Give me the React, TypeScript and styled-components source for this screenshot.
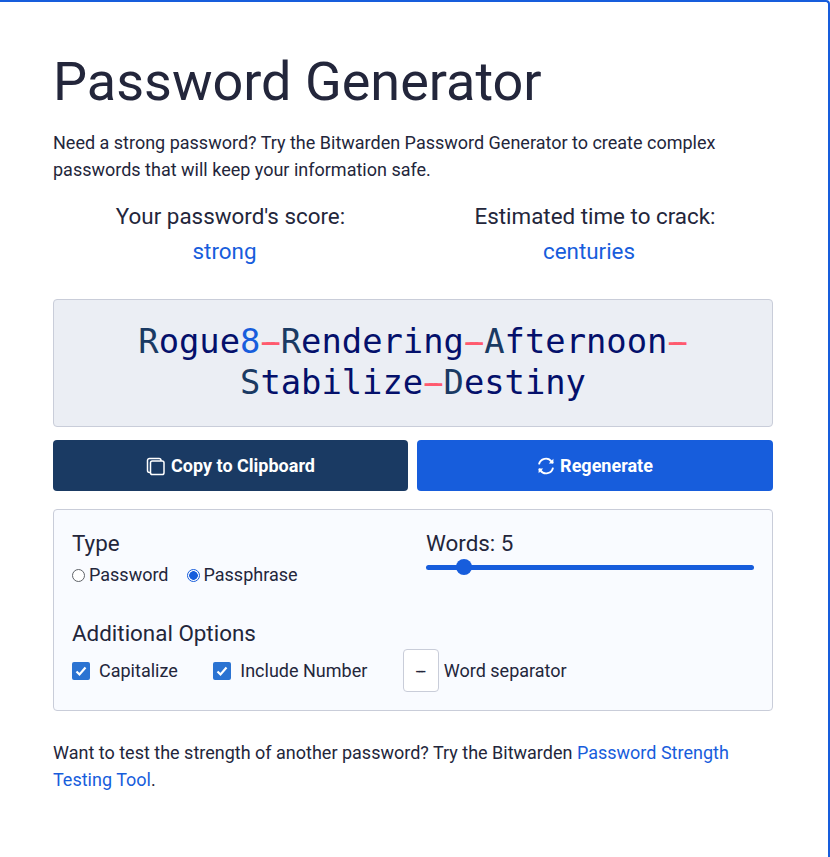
import React from 'react';
import styled, { createGlobalStyle } from 'styled-components';

const GlobalStyle = createGlobalStyle`
  html, body {
    margin: 0;
    padding: 0;
    background: #ffffff;
  }

  body {
    font-family: 'Roboto', 'Liberation Sans', sans-serif;
    color: #23263b;
  }
`;

const Card = styled.main`
  width: 830px;
  height: 857px;
  box-sizing: border-box;
  border-top: 2px solid #175ddc;
  border-right: 2px solid #175ddc;
  border-top-right-radius: 4px;
  padding: 47px 55px 0 53px;
  overflow: hidden;
`;

const Title = styled.h1`
  margin: 0;
  font-size: 54px;
  line-height: 66px;
  font-weight: 400;
  color: #23263b;
`;

const Intro = styled.p`
  margin: 14px 0 0;
  font-size: 18px;
  line-height: 27px;
`;

const ScoreRow = styled.div`
  display: grid;
  grid-template-columns: 355px 356px;
  gap: 9px;
  margin-top: 15px;
`;

const Score = styled.div`
  text-align: center;
`;

const ScoreLabel = styled.div`
  font-size: 22.4px;
  line-height: 36px;
`;

const ScoreValue = styled.div`
  font-size: 22.4px;
  line-height: 35px;
  padding-right: 12px;
  color: #175ddc;
`;

const PasswordBox = styled.div`
  box-sizing: border-box;
  height: 128px;
  margin-top: 30px;
  padding: 21px 60px 0;
  background: #ebeef4;
  border: 1px solid #c9cdd9;
  border-radius: 4px;
  font-family: 'DejaVu Sans Mono', 'Liberation Mono', monospace;
  font-size: 33.8px;
  line-height: 41px;
  text-align: center;
  color: #04106b;
`;

const Upper = styled.span`
  color: #1a3a63;
`;

const Digit = styled.span`
  color: #175ddc;
`;

const Dash = styled.span`
  display: inline-block;
  color: #ff5a6e;
  text-shadow: 4.5px 0 #ff5a6e, -4.5px 0 #ff5a6e;
`;

const ButtonRow = styled.div`
  display: grid;
  grid-template-columns: 355px 356px;
  gap: 9px;
  margin-top: 13px;
`;

const Button = styled.button<{ $dark?: boolean }>`
  height: 51px;
  border: 0;
  border-radius: 4px;
  display: flex;
  align-items: center;
  justify-content: center;
  gap: 5px;
  padding: 0;
  background: ${({ $dark }) => ($dark ? '#1a3a63' : '#175ddc')};
  color: #ffffff;
  font-family: inherit;
  font-size: 18px;
  font-weight: 700;
`;

const Panel = styled.section`
  box-sizing: border-box;
  height: 202px;
  margin-top: 18px;
  padding: 18px 18px 0;
  background: #f9fbff;
  border: 1px solid #c9cdd9;
  border-radius: 4px;
`;

const TopRow = styled.div`
  display: grid;
  grid-template-columns: 354px 328px;
`;

const GroupTitle = styled.div`
  font-size: 22.4px;
  line-height: 30px;
`;

const RadioRow = styled.div`
  display: flex;
  gap: 18px;
  margin-top: 5px;
`;

const OptionLabel = styled.label`
  display: flex;
  align-items: center;
  font-size: 18px;
  line-height: 24px;
`;

const Radio = styled.input.attrs({ type: 'radio' })`
  appearance: none;
  width: 13px;
  height: 13px;
  margin: 0 4px 0 0;
  border: 1px solid #5f6368;
  border-radius: 50%;
  background: #ffffff;

  &:checked {
    border-color: #175ddc;
    background: radial-gradient(circle, #175ddc 0 4px, #ffffff 4.6px);
  }
`;

const Range = styled.input.attrs({ type: 'range' })`
  appearance: none;
  display: block;
  width: 328px;
  height: 16px;
  margin: 1px 0 0;
  background: transparent;

  &::-webkit-slider-runnable-track {
    height: 5px;
    border-radius: 3px;
    background: #175ddc;
  }

  &::-webkit-slider-thumb {
    appearance: none;
    width: 16px;
    height: 16px;
    margin-top: -5.5px;
    border-radius: 50%;
    background: #175ddc;
  }
`;

const OptionsTitle = styled(GroupTitle)`
  margin-top: 31px;
`;

const OptionsRow = styled.div`
  display: flex;
  align-items: center;
  margin-top: 1px;
`;

const Check = styled.span`
  width: 18px;
  height: 18px;
  border-radius: 2px;
  background: #2b73d2;
  display: flex;
  align-items: center;
  justify-content: center;
  margin-right: 9px;
`;

const CheckOption = styled(OptionLabel)`
  margin-right: 35.5px;
`;

const SeparatorBox = styled.div`
  box-sizing: border-box;
  width: 36px;
  height: 43px;
  margin-right: 5px;
  border: 1px solid #c9cdd9;
  border-radius: 4px;
  background: #ffffff;
  display: flex;
  align-items: center;
  justify-content: center;
  font-size: 18px;
  text-shadow: 2.5px 0 #23263b, -2.5px 0 #23263b;
`;

const Footer = styled.p`
  margin: 28px 0 0;
  font-size: 18px;
  line-height: 27px;
`;

const Link = styled.a`
  color: #175ddc;
  text-decoration: none;
`;

const CopyIcon = () => (
  <svg width="20" height="20" viewBox="0 0 20 20" fill="none" stroke="#fff" strokeWidth="1.5">
    <path d="M4 16.5h-.5A2 2 0 0 1 1.5 14.5V4.5a2 2 0 0 1 2-2h9.5a2 2 0 0 1 2 2V5" />
    <rect x="4.5" y="5" width="13.5" height="13.5" rx="1.8" />
  </svg>
);

const RefreshIcon = () => (
  <svg width="18" height="18" viewBox="0 0 18 18" fill="none" stroke="#fff" strokeWidth="1.9">
    <path d="M2 7.4A7 7 0 0 1 14.6 4.6L16 6" />
    <path d="M16.4 1.8v4.6h-4.6" fill="#fff" strokeWidth="0" />
    <path d="M16 10.6A7 7 0 0 1 3.4 13.4L2 12" />
    <path d="M1.6 16.2v-4.6h4.6" fill="#fff" strokeWidth="0" />
  </svg>
);

const CheckMark = () => (
  <svg width="12" height="12" viewBox="0 0 12 12" fill="none" stroke="#fff" strokeWidth="2.2">
    <path d="M1.5 6.5 4.5 9.5 10.5 2.5" />
  </svg>
);

const App = (): JSX.Element => (
  <>
    <GlobalStyle />
    <Card>
      <Title>Password Generator</Title>
      <Intro>
        Need a strong password? Try the Bitwarden Password Generator to create complex passwords
        that will keep your information safe.
      </Intro>
      <ScoreRow>
        <Score>
          <ScoreLabel>Your password's score:</ScoreLabel>
          <ScoreValue>strong</ScoreValue>
        </Score>
        <Score>
          <ScoreLabel>Estimated time to crack:</ScoreLabel>
          <ScoreValue>centuries</ScoreValue>
        </Score>
      </ScoreRow>
      <PasswordBox>
        <Upper>R</Upper>ogue<Digit>8</Digit>
        <Dash>-</Dash>
        <Upper>R</Upper>endering<Dash>-</Dash>
        <Upper>A</Upper>fternoon<Dash>-</Dash>
        <Upper>S</Upper>tabilize<Dash>-</Dash>
        <Upper>D</Upper>estiny
      </PasswordBox>
      <ButtonRow>
        <Button $dark>
          <CopyIcon />
          Copy to Clipboard
        </Button>
        <Button>
          <RefreshIcon />
          Regenerate
        </Button>
      </ButtonRow>
      <Panel>
        <TopRow>
          <div>
            <GroupTitle>Type</GroupTitle>
            <RadioRow>
              <OptionLabel>
                <Radio name="type" />
                Password
              </OptionLabel>
              <OptionLabel>
                <Radio name="type" defaultChecked />
                Passphrase
              </OptionLabel>
            </RadioRow>
          </div>
          <div>
            <GroupTitle>Words: 5</GroupTitle>
            <Range min={3} max={24} defaultValue={5} />
          </div>
        </TopRow>
        <OptionsTitle>Additional Options</OptionsTitle>
        <OptionsRow>
          <CheckOption>
            <Check>
              <CheckMark />
            </Check>
            Capitalize
          </CheckOption>
          <CheckOption>
            <Check>
              <CheckMark />
            </Check>
            Include Number
          </CheckOption>
          <SeparatorBox>-</SeparatorBox>
          <OptionLabel>Word separator</OptionLabel>
        </OptionsRow>
      </Panel>
      <Footer>
        Want to test the strength of another password? Try the Bitwarden{' '}
        <Link href="#strength">Password Strength Testing Tool</Link>.
      </Footer>
    </Card>
  </>
);

export default App;
